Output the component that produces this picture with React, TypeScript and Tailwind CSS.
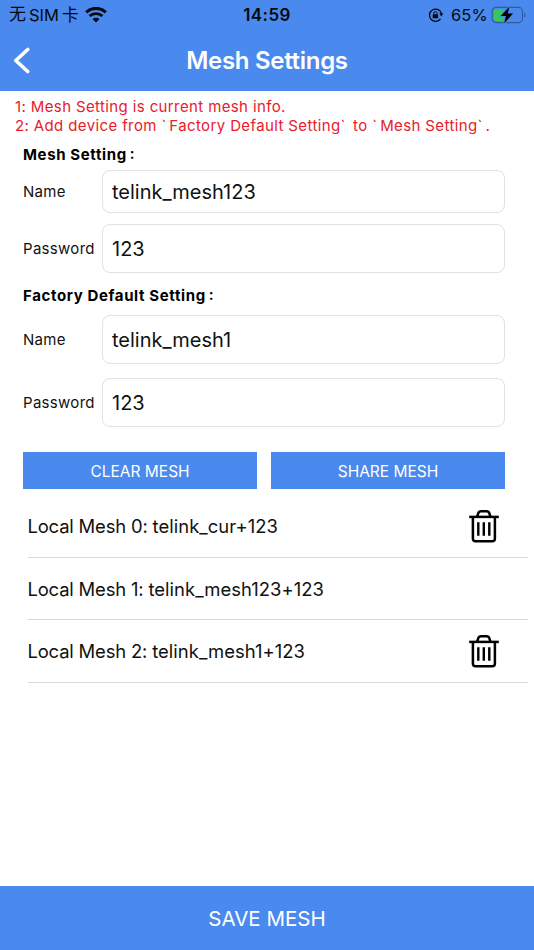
const localMeshes = [
    { name: "telink_cur+123", removable: true },
    { name: "telink_mesh123+123", removable: false },
    { name: "telink_mesh1+123", removable: true },
];

function WifiIcon() {
    return (
        <svg width="22" height="16" viewBox="0 0 22 16" fill="none">
            <path d="M1.2 5.3C6.8.1 15.2.1 20.8 5.3" stroke="#05080f" strokeWidth="3.1" />
            <path d="M4.6 9C8.2 5.8 13.8 5.8 17.4 9" stroke="#05080f" strokeWidth="2.8" />
            <path d="M7.5 12.1C9.5 10.3 12.5 10.3 14.5 12.1L11 15.5Z" fill="#05080f" />
        </svg>
    );
}

function RotationLockIcon() {
    return (
        <svg width="16" height="16" viewBox="0 0 16 16" fill="none">
            <path d="M12.5 11.8A6.1 6.1 0 1 1 13.3 6.1" stroke="#05080f" strokeWidth="1.3" />
            <path d="M11.3 6.3H15.3L13.3 9.4Z" fill="#05080f" />
            <rect x="4.7" y="7.2" width="5.4" height="4.1" rx="0.5" fill="#05080f" />
            <path d="M5.8 7.4V6.2A1.6 1.6 0 0 1 9 6.2V7.4" stroke="#05080f" />
        </svg>
    );
}

function BatteryIcon() {
    return (
        <svg width="36" height="18" viewBox="0 0 36 18" fill="none">
            <rect x="1.1" y="1.4" width="30.4" height="15.2" rx="4" stroke="#315b9e" strokeWidth="1.2" />
            <path d="M5.2 3.2H13.8L9 10.2H13L12 14.9H5.2Q2.8 14.9 2.8 12.5V5.6Q2.8 3.2 5.2 3.2Z" fill="#35c759" />
            <path d="M33.2 6.3Q34.6 7.2 34.6 9T33.2 11.7Z" fill="#315b9e" />
            <path d="M18.5 0.5L9.8 10H15L13.2 17.3L22.1 7.6H16.7Z" fill="#000" stroke="#4a89ed" strokeWidth="1.6" paintOrder="stroke" />
        </svg>
    );
}

function TrashIcon() {
    return (
        <svg width="32" height="34" viewBox="0 0 32 34" fill="none" stroke="#000" strokeWidth="2.5">
            <path d="M1.2 7.9H30.8" />
            <path d="M9.2 7.5L10.3 4.2Q11 2.2 13 2.2H18.6Q20.6 2.2 21.3 4.2L22.4 7.5" />
            <path d="M4.9 8V29.5Q4.9 32.3 7.7 32.3H24.1Q26.9 32.3 26.9 29.5V8" />
            <path d="M10.3 13.3V26.7M15.8 13.3V26.7M21.3 13.3V26.7" strokeWidth="2.4" />
        </svg>
    );
}

function StatusBar() {
    return (
        <div className="grid h-[30px] grid-cols-[1fr_auto_1fr] items-center text-[16.5px] text-[#05080f]">
            <div className="flex items-center pl-[9px]">
                <span className="text-[17px] whitespace-nowrap">无</span>
                <span className="ml-[3px]">SIM</span>
                <span className="mr-[7px] ml-[3px]">卡</span>
                <WifiIcon />
            </div>
            <span className="pt-[2px] text-[17px] font-semibold tracking-[0.4px]">14:59</span>
            <div className="flex items-center justify-end pr-[7px]">
                <RotationLockIcon />
                <span className="mr-[3px] ml-[7px] tracking-[0.2px]">65%</span>
                <BatteryIcon />
            </div>
        </div>
    );
}

function NavBar() {
    return (
        <div className="grid h-[61px] grid-cols-[1fr_auto_1fr] items-center text-white">
            <svg className="ml-[12px]" width="18" height="28" viewBox="0 0 18 28" fill="none">
                <path d="M15.7 2.5L3.8 13.5L15.7 24.5" stroke="#fff" strokeWidth="3.6" strokeLinecap="round" strokeLinejoin="round" />
            </svg>
            <h1 className="text-[24px] font-semibold tracking-[-0.3px]">Mesh Settings</h1>
        </div>
    );
}

function Tick() {
    return <span className="tracking-[3.1px]">`</span>;
}

function SectionTitle({ title, className }: { title: string; className: string }) {
    return (
        <h2 className={`h-[20px] text-[15px] leading-[20px] font-bold tracking-[0.62px] text-black ${className}`}>
            {title}
            <span className="relative -top-px ml-[3px] font-semibold">:</span>
        </h2>
    );
}

function Field({ label, value, height }: { label: string; value: string; height: string }) {
    return (
        <div className={`flex items-center ${height}`}>
            <span className="w-[78.5px] shrink-0 pt-[2px] text-[15px] tracking-[0.3px]">{label}</span>
            <div className="flex h-full flex-1 items-center rounded-[8px] border-[1.5px] border-[#e1e1e1] pl-[9.5px] text-[20px]">
                {value}
            </div>
        </div>
    );
}

export default function App() {
    return (
        <div className="flex h-[950px] w-[534px] flex-col overflow-hidden bg-white font-['Inter','Noto_Sans_CJK_SC',sans-serif] text-[#111]">
            <header className="h-[91px] shrink-0 bg-[#4a89ed]">
                <StatusBar />
                <NavBar />
            </header>

            <div className="mt-[7px] ml-[15px] h-[38px] text-[15px] leading-[18.5px] tracking-[0.38px] whitespace-nowrap text-[#e7202b]">
                <p>1: Mesh Setting is current mesh info.</p>
                <p>2: Add device from <Tick />Factory Default Setting<Tick /> to <Tick />Mesh Setting<Tick />.</p>
            </div>

            {/* Mesh credentials */}
            <div className="flex flex-col pr-[29px] pl-[23px]">
                <SectionTitle title="Mesh Setting" className="mt-[9px] mb-[5px]" />
                <Field label="Name" value="telink_mesh123" height="h-[43px]" />
                <div className="h-[11px]" />
                <Field label="Password" value="123" height="h-[49px]" />
                <SectionTitle title="Factory Default Setting" className="mt-[13px] mb-[9px]" />
                <Field label="Name" value="telink_mesh1" height="h-[49px]" />
                <div className="h-[14px]" />
                <Field label="Password" value="123" height="h-[49px]" />

                <div className="mt-[25px] grid h-[37px] grid-cols-2 gap-[14px] text-[15.5px] text-white">
                    <button className="bg-[#4a89ed] pt-[2px]">CLEAR MESH</button>
                    <button className="bg-[#4a89ed] pt-[2px]">SHARE MESH</button>
                </div>
            </div>

            {/* Saved meshes */}
            <div className="mt-[6px]">
                {localMeshes.map((mesh, index) => (
                    <div key={mesh.name} className="mr-[6px] ml-[28px] flex h-[62.5px] items-center justify-between border-b border-[#d8d8d8] pr-[28px]">
                        <span className="-ml-[0.5px] pt-[3px] text-[18.45px]">
                            <span className="tracking-[-0.18px]">Local Mesh {index}: </span>
                            <span className="tracking-[0.04px]">{mesh.name}</span>
                        </span>
                        {mesh.removable && <TrashIcon />}
                    </div>
                ))}
            </div>

            <button className="mt-auto h-[64px] shrink-0 bg-[#4a89ed] pt-[2px] text-[20.5px] text-white">SAVE MESH</button>
        </div>
    );
}
